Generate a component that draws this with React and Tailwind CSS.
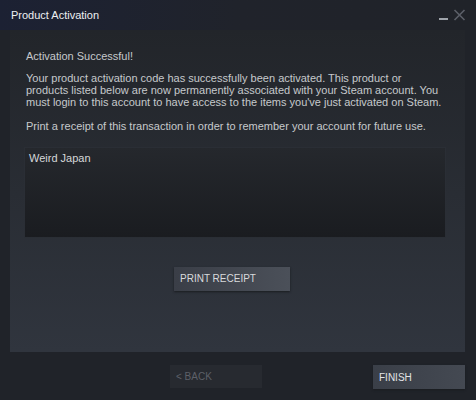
export default function App() {
  return (
    <div className="w-[476px] h-[400px] bg-[#202329] flex flex-col font-['Liberation_Sans',Arial,sans-serif] overflow-hidden">
      {/* Title bar */}
      <div className="h-[30px] shrink-0 flex items-center justify-between pl-[11px] pr-[10px] bg-gradient-to-r from-[#1c2133] via-[#20232b] to-[#202329]">
        <span className="text-[11px] text-[#eef0f2]">Product Activation</span>
        <div className="flex items-center gap-[5px]">
          <span className="block w-[9px] h-[2px] bg-[#9ea3aa] mt-[8px]" />
          <svg width="13" height="12" viewBox="0 0 13 12">
            <path d="M1.5 1 L11.5 11 M11.5 1 L1.5 11" stroke="#5c6069" strokeWidth="1.6" />
          </svg>
        </div>
      </div>

      <div className="flex flex-1 pl-[10px] pr-[11px]">
        <div className="flex flex-col flex-1">
          {/* Panel */}
          <div className="h-[322px] bg-gradient-to-b from-[#22252a] to-[#30353e] pl-[16px] pr-[19px] pt-[20px] text-[11px] leading-[12px] text-[#c6c9cc]">
            <p>Activation Successful!</p>
            <p className="mt-[10px]">
              Your product activation code has successfully been activated. This product or products listed below are now permanently associated with your Steam account. You must login to this account to have access to the items you've just activated on Steam.
            </p>
            <p className="mt-[12px]">Print a receipt of this transaction in order to remember your account for future use.</p>
            <div className="mt-[16px] -ml-[1px] w-[420px] h-[89px] bg-gradient-to-b from-[#25282d] to-[#1a1c20] px-[4px] pt-[4px] shadow-[0_0_0_1px_#2a2e35]">
              <span className="text-[#d5d7d9]">Weird Japan</span>
            </div>
            <div className="flex justify-center mt-[30px] pr-[8px]">
              <button className="w-[116px] h-[24px] pl-[6px] text-left text-[10px] text-[#d8dadc] bg-gradient-to-r from-[#3a3e47] to-[#4b5059] shadow-[0_1px_2px_#1a1c20]">
                PRINT RECEIPT
              </button>
            </div>
          </div>

          {/* Footer */}
          <div className="flex items-start pt-[13px]">
            <button className="ml-[160px] w-[92px] h-[23px] pl-[6px] text-left text-[10px] text-[#5d6068] bg-[#272a30]">
              &lt; BACK
            </button>
            <button className="ml-auto w-[92px] h-[24px] pl-[6px] text-left text-[10px] text-[#e2e4e6] bg-gradient-to-r from-[#3a3f48] to-[#444952] shadow-[0_1px_2px_#1a1c20]">
              FINISH
            </button>
          </div>
        </div>
      </div>
    </div>
  );
}
